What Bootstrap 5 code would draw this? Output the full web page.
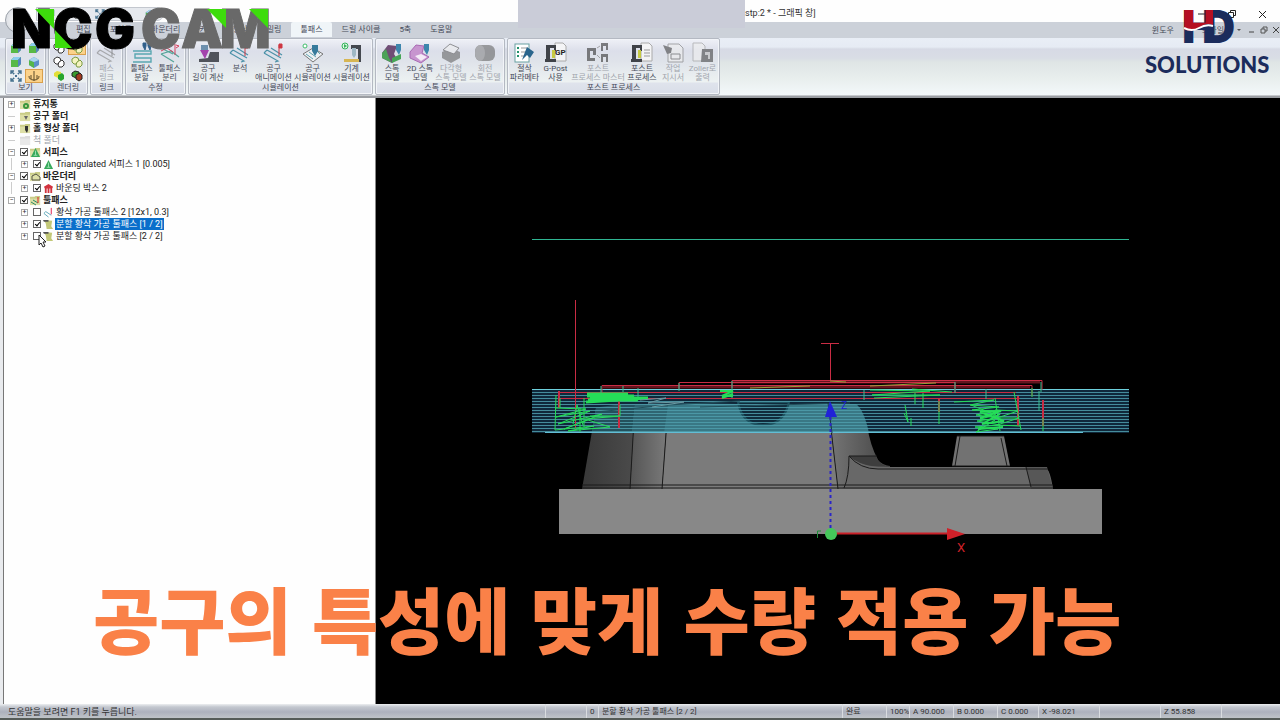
<!DOCTYPE html>
<html lang="ko">
<head>
<meta charset="utf-8">
<meta name="viewport" content="width=device-width, initial-scale=1">
<title>NCG CAM</title>
<link href="https://cdn.jsdelivr.net/npm/bootstrap@5.3.0/dist/css/bootstrap.min.css" rel="stylesheet">
<style>
body{font-family:Roboto,"Noto Sans CJK KR",sans-serif;font-size:8px;line-height:9px;color:#454a58;background:#e9ebee;overflow:hidden}
button{border:0;background:none;padding:0;color:inherit;font-size:inherit;line-height:inherit}
svg{display:block}
.titlebar{height:22px;background:#fefefe}
.tool-left{width:518px;padding-left:36px}
.orb{left:5px;top:7px;width:26px;height:26px;border-radius:50%;border:1px solid #9aa0a8;background:radial-gradient(#fff,#cfd3da)}
.quick{height:14px;margin-top:7px;width:128px;background:#e6e9ee;border:1px solid #c3c7ce;border-radius:0 8px 8px 0}
.cover{width:227px;background:#caccd8;height:28px;position:relative}
.win-title{font-size:9px;line-height:12px;color:#333;margin-top:7px}
.winbtns{margin-top:5px;padding-right:13px;gap:20px}
.tabs{height:16px;background:#ccd1d9;padding-left:67px;gap:1px}
.tabs button{padding:0 9px;height:15px;white-space:nowrap}
.tabs .current{background:#f0f5f8;border-radius:2px 2px 0 0}
.doc-tools button{padding:0;margin-right:12px}
.ribbon{height:57px;padding:0 0 0 5px;gap:2px;background:linear-gradient(#e9eef6 0,#e6ebf4 9px,#d7dae5 11px,#d9dde5 20px,#dfe5e5 24px,#e8eeed 40px,#f3f8fa 57px)}
.grp{border:1px solid #b4b9c2;border-radius:2px;background:linear-gradient(#eff1f7,#dcdfea 12px,#dfe3ea 22px,#edf2f2 43px,#dfe3ec 44px,#d9dee8);box-shadow:inset 0 0 0 1px #f2f4f8;height:57px}
.grp-title{height:12px;line-height:12px;text-align:center}
.grp-body{height:43px;padding-top:2px}
.tool{text-align:center;white-space:nowrap}
.tool svg{width:22px;height:22px;margin:0 auto}
.off{color:#a0a4ac}
.off svg{filter:grayscale(1);opacity:.6}
.t28{width:28px}.t31{width:31px}.t34{width:34px}.t36{width:36px}.t39{width:39px}.t54{width:54px}
.g-view{width:41px}.g-render{width:40px}.g-link{width:33px}.g-edit{width:61px}.g-sim{width:185px}.g-stock{width:130px}.g-post{width:213px}
.mini{display:grid;grid-template-columns:18px 18px;grid-auto-rows:14px;padding-left:1px}
.mini button{display:flex;align-items:center;justify-content:center}
.mini svg{width:12px;height:12px}
.mini .on{background:#fbd28a;border:1px solid #d9a04c}
.seam{height:3px;background:#9b9ea3;border-top:1px solid #c6c9cd}
.treepane{width:373px;margin-left:3px;background:#fefefe;border-left:1px solid #777;border-right:1px solid #888;font-size:9px;color:#222}
.treepane ul{list-style:none;margin:0;padding:0}
.treepane ul ul{padding-left:13px;background:linear-gradient(90deg,transparent 7px,#ccc 7px,#ccc 8px,transparent 8px)}
.treepane li:last-child>ul{background:none}
.node{height:12px;line-height:12px;padding-left:4px;gap:2px;white-space:nowrap}
.exp{width:7px;height:7px;border:1px solid #aaa;background:#fff;font-size:7px;line-height:5px;text-align:center;color:#333;margin-right:3px}
.leaf{width:7px;height:1px;background:#ccc;margin-right:3px}
.node svg{width:11px;height:11px;flex:none}
.node input{appearance:none;width:8px;height:8px;border:1px solid #666;background:#fff;margin:0;position:relative;flex:none}
.node input:checked::after{content:"";position:absolute;left:2px;top:0;width:3px;height:5px;border:solid #000;border-width:0 1px 1px 0;transform:rotate(40deg)}
.node label{padding:0 1px;margin-left:-1px}
.picked label{background:#0a6fcb;color:#fff}
.view3d{background:#000;min-width:0}
.cursor{left:38px;top:234px;width:9px;height:14px}
.status{height:16px;background:linear-gradient(#eceef0 0,#c3c7cf 3px,#adb1bd 8px,#c2c6ca 15px);border-bottom:2px solid #555b58;color:#333}
.status span{height:14px;line-height:16px;padding-left:3px;border-left:1px solid #d9dce0;white-space:nowrap;flex:none}
.status .hint{font-size:9px}
.s12{width:12px}.s23{width:23px}.s41{width:41px}.s44{width:44px}.s59{width:59px}.s61{width:61px}.s244{width:244px}
.caption{left:0;right:0;top:565px;padding-left:93px;font-family:"Noto Sans CJK KR",sans-serif;font-weight:900;font-size:72px;line-height:104px;color:#fa8148;white-space:nowrap}
.brand{left:10px;top:6px;width:262px;height:46px}
.maker{right:4px;top:6px;width:136px;height:74px}
</style>
</head>
<body class="vh-100 d-flex flex-column position-relative">

<svg width="0" height="0" class="position-absolute" aria-hidden="true">
<defs>
<symbol id="cube" viewBox="0 0 12 12"><path d="M1 4l3-3h7v7l-3 3H1z" fill="#58b947"/><path d="M1 4l3-3h7L8 4z" fill="#8ccdf0"/><path d="M8 4l3-3v7l-3 3z" fill="#5584bd"/></symbol>
<symbol id="cube2" viewBox="0 0 12 12"><path d="M1 4l5-3 5 3v5l-5 3-5-3z" fill="#5c8fc8"/><path d="M1 4l5 2v6L1 9z" fill="#55b64a"/><path d="M1 4l5-3 5 3-5 2z" fill="#a9d5ef"/></symbol>
<symbol id="fit" viewBox="0 0 12 12"><path d="M1 4V1h3M8 1h3v3M11 8v3H8M4 11H1V8M1 1l10 10M11 1L1 11" stroke="#47728f" stroke-width="1.4" fill="none"/><path d="M4 4h4v4H4z" fill="#e8ecf2"/><path d="M5 5h2v2H5z" fill="#47728f"/></symbol>
<symbol id="anchor" viewBox="0 0 12 12"><path d="M6 1v10M1 6q0 4 5 4 5 0 5-4M3 5v4M9 5v4" stroke="#5c4a28" fill="none"/></symbol>
<symbol id="solidw" viewBox="0 0 12 12"><path d="M1 3l3-2 3 1 1 3-2 3H3L1 6z" fill="#fff" stroke="#333"/><path d="M6 6l3-2 2 2v3l-2 2H6L5 9z" fill="#fff" stroke="#333"/></symbol>
<symbol id="solidg" viewBox="0 0 12 12"><path d="M1 3l3-2 3 1 1 3-2 3H3L1 6z" fill="#f4f4c0" stroke="#7a9a40"/><path d="M6 6l3-2 2 2v3l-2 2H6L5 9z" fill="#f4f4c0" stroke="#7a9a40"/></symbol>
<symbol id="solidf" viewBox="0 0 12 12"><path d="M1 3l3-2 4 1v4L5 8 1 6z" fill="#e3df38"/><path d="M5 5l4-2 2 2v4l-3 2-3-2z" fill="#27a62c"/></symbol>
<symbol id="solidd" viewBox="0 0 12 12"><path d="M1 3l3-2 4 1v4L5 8 1 6z" fill="#3a9a2e" stroke="#222"/><path d="M5 5l4-2 2 2v4l-3 2-3-2z" fill="#a33b1f" stroke="#222"/></symbol>
<symbol id="zig" viewBox="0 0 22 22"><path d="M4 8l14 8M1 11l14 8-3 1M4 8l-3 3M8 6l11 7" stroke="#4b91a8" stroke-width="1.2" fill="none"/><path d="M16 14V3M16 2h3v4h-3z" stroke="#ce3742" fill="#ce3742"/></symbol>
<symbol id="zigp" viewBox="0 0 22 22"><path d="M2 12l13 8M2 12l10-3 8 6M4 7l10 5" stroke="#55a599" stroke-width="1.2" fill="none"/><path d="M16 13V2M17 3l3 1-3 2M2 9l6-3 6 4" stroke="#d6405c" fill="none"/></symbol>
<symbol id="split" viewBox="0 0 22 22"><path d="M2 20h18v-4H4v-4h16V9H2" stroke="#59a7b1" stroke-width="1.4" fill="none"/><path d="M12 1h3v3l-1 4-2-4zM17 1h3v3l-1 4-2-4z" fill="#315f8b" stroke="#315f8b"/></symbol>
<symbol id="length" viewBox="0 0 22 22"><path d="M2 20v-3l9-1 2-6h9v10z" fill="#50535b"/><path d="M4 3h7v5H4z" fill="#6d90ae"/><path d="M3 8h9l-4 9z" fill="#a443ad"/></symbol>
<symbol id="sim" viewBox="0 0 22 22"><path d="M1 12l10-6 10 6-10 8z" fill="#eceff3" stroke="#777"/><path d="M4 12l7 5M7 10l7 5M15 9l3 3" stroke="#60a4af"/><path d="M10 3h6v6l-3 5-3-5z" fill="#367a9c"/><circle cx="3" cy="4" r="2" fill="#fff" stroke="#40bd6b"/></symbol>
<symbol id="machine" viewBox="0 0 22 22"><path d="M10 3h10v17h-3V7h-7z" fill="#444850"/><path d="M11 6h4v7l-2 3-2-3z" fill="#9eb7c4"/><path d="M3 17h15v3H3z" fill="#d7b654"/><circle cx="4" cy="4" r="3" fill="#dff7e4" stroke="#35b45c"/><path d="M3 2l3 2-3 2z" fill="#35b45c"/></symbol>
<symbol id="stock" viewBox="0 0 22 22"><path d="M1 11l6-8 9 1-3 8 3 5-5 4-10-5z" fill="#704d76"/><path d="M1 11l4-4 3 9 3 5-10-5z" fill="#4ca258"/><path d="M11 21v-5l9-4v5z" fill="#46a557"/><path d="M15 2h5v6l-2 5-3-5z" fill="#3d86ad"/></symbol>
<symbol id="stock2" viewBox="0 0 22 22"><path d="M1 10l6-7 8 1-2 7 7 4-8 6L1 16z" fill="#c795cf" stroke="#a869b3"/><path d="M6 14l6-2 6 3-6 4z" fill="#f4eaf7"/><path d="M15 2h5v6l-2 5-3-5z" fill="#3d86ad"/></symbol>
<symbol id="poly" viewBox="0 0 22 22"><path d="M2 10l9-4 9 4v6l-9 5-9-5z" fill="#666"/><path d="M3 8l7-6 9 4-5 6z" fill="#eee" stroke="#555"/></symbol>
<symbol id="cyl" viewBox="0 0 22 22"><rect x="1" y="3" width="20" height="16" rx="6" fill="#666"/><ellipse cx="6" cy="11" rx="5" ry="8" fill="#888"/></symbol>
<symbol id="params" viewBox="0 0 22 22"><rect x="1" y="2" width="14" height="18" fill="#fff" stroke="#68a0a1"/><path d="M3 6h2M3 10h2M3 14h2" stroke="#23916b" stroke-width="2"/><path d="M7 6h6M7 10h5M7 14h4" stroke="#999"/><path d="M13 5l7 5-4 6-3-3-5 5 3-8z" fill="#29658d"/></symbol>
<symbol id="gp" viewBox="0 0 22 22"><path d="M10 1h8l3 3v15H10z" fill="#f4f4f6" stroke="#aaa"/><path d="M1 3h10v6H9V6H5v11H1zM0 17h11v3H0z" fill="#3f4248"/><path d="M7 8h3v8H7z" fill="#c6ca44"/></symbol>
<symbol id="master" viewBox="0 0 22 22"><path d="M0 6h9v7H6V9H3v7h5v3H0zM14 1h7v7h-2V4h-3v5h-2zM14 12h7v8h-2v-5h-3v5h-2z" fill="#333"/><path d="M10 6l3-2M10 13l3 3" stroke="#777"/></symbol>
<symbol id="sheet" viewBox="0 0 22 22"><path d="M6 2h11l4 4v14H6z" fill="#eee" stroke="#777"/><path d="M1 3l9 3-1 5-4 1z" fill="#444"/><path d="M9 12h9v5H9z" fill="none" stroke="#555"/></symbol>
<symbol id="zoller" viewBox="0 0 22 22"><path d="M1 1h9l3 3v15H1z" fill="#eee" stroke="#999"/><path d="M10 7h11v13H9z" fill="#444"/><path d="M13 10h5v7h-2v-4h-3z" fill="#bbb"/></symbol>
<symbol id="folder" viewBox="0 0 12 12"><path d="M0 2h5l1-1h5v10H0z" fill="#c9cc87"/><path d="M0 4h11v7H0z" fill="#dddfa6"/></symbol>
<symbol id="surf" viewBox="0 0 12 12"><path d="M6 1l5 10H1z" fill="#35a85a"/><path d="M6 4v5M4 9h4" stroke="#9fe0b4"/></symbol>
<symbol id="box" viewBox="0 0 12 12"><path d="M1 4l5-3 5 3-1 2v5H8V6H7v5H5V6H4v5H2V6z" fill="#d2333f"/></symbol>
<symbol id="path" viewBox="0 0 12 12"><path d="M1 7l5 4M3 5l6 4M1 7l2-2" stroke="#58a4b8" fill="none"/><path d="M9 8V1" stroke="#d14"/></symbol>
<symbol id="roll" viewBox="0 0 12 12"><path d="M1 1l9 1-1 6 2 3H4L3 5z" fill="#c3c878"/><path d="M0 1h6v2H1z" fill="#555"/></symbol>
</defs>
</svg>

<header>
  <div class="titlebar d-flex">
    <div class="tool-left">
      <div class="quick d-flex justify-content-between align-items-center px-2"><svg width="10" height="10"><use href="#cube"/></svg><svg width="10" height="10"><use href="#solidw"/></svg><svg width="10" height="10"><use href="#fit"/></svg><svg width="10" height="10"><use href="#anchor"/></svg><svg width="10" height="10"><use href="#cube2"/></svg></div>
    </div>
    <div class="cover"></div>
    <div class="win-title">stp:2 * - 그래픽 창]</div>
    <div class="winbtns d-flex ms-auto">
      <button aria-label="최소화"><svg width="10" height="10"><path d="M1 5h8" stroke="#222"/></svg></button>
      <button aria-label="복원"><svg width="10" height="10"><path d="M1.500 3.500h5v5h-5zM3.500 3V1.500h5v5H7" fill="none" stroke="#222"/></svg></button>
      <button aria-label="닫기"><svg width="10" height="10"><path d="M2 2l7 7M9 2l-7 7" stroke="#222"/></svg></button>
    </div>
  </div>
  <div class="tabs d-flex">
    <button>편집</button><button>포인트</button><button>바운더리</button><button>커브</button><button>형상</button><button>밀링</button><button class="current">툴패스</button><button>드릴 사이클</button><button>5축</button><button>도움말</button>
    <div class="doc-tools d-flex align-items-center ms-auto"><button>윈도우</button><button class="ms-3">스타일</button>
    <svg width="8" height="8"><path d="M1 3h4L3 5z" fill="#555"/></svg><svg class="ms-1" width="8" height="8"><path d="M1 6h5" stroke="#444"/></svg><svg class="ms-1" width="8" height="8"><path d="M1 3h4v4H1zM3 3V1h4v4H5" fill="none" stroke="#555"/></svg><svg class="ms-1" width="8" height="8"><path d="M1 1l6 6M7 1L1 7" stroke="#444"/></svg></div>
  </div>
  <div class="ribbon d-flex">
    <section class="grp g-view"><div class="grp-body mini"><button aria-label="앞면"><svg><use href="#cube"/></svg></button><button aria-label="윗면"><svg><use href="#cube"/></svg></button><button aria-label="옆면"><svg><use href="#cube"/></svg></button><button aria-label="등각"><svg><use href="#cube2"/></svg></button><button aria-label="맞춤"><svg><use href="#fit"/></svg></button><button class="on" aria-label="회전"><svg><use href="#anchor"/></svg></button></div><div class="grp-title">보기</div></section>
    <section class="grp g-render"><div class="grp-body mini"><button aria-label="선"><svg><use href="#solidw"/></svg></button><button class="on" aria-label="윤곽"><svg><use href="#solidg"/></svg></button><button aria-label="와이어"><svg><use href="#solidw"/></svg></button><button aria-label="은선"><svg><use href="#solidg"/></svg></button><button aria-label="음영"><svg><use href="#solidf"/></svg></button><button aria-label="음영과 선"><svg><use href="#solidd"/></svg></button></div><div class="grp-title">렌더링</div></section>
    <section class="grp g-link"><div class="grp-body d-flex justify-content-center"><button class="tool t28 off"><svg><use href="#zig"/></svg>패스<br>링크</button></div><div class="grp-title">링크</div></section>
    <section class="grp g-edit"><div class="grp-body d-flex justify-content-center"><button class="tool t28"><svg><use href="#split"/></svg>툴패스<br>분할</button><button class="tool t28"><svg><use href="#zigp"/></svg>툴패스<br>분리</button></div><div class="grp-title">수정</div></section>
    <section class="grp g-sim"><div class="grp-body d-flex justify-content-center"><button class="tool t36"><svg><use href="#length"/></svg>공구<br>길이 계산</button><button class="tool t28"><svg><use href="#zig"/></svg>분석<br>&nbsp;</button><button class="tool t39"><svg><use href="#zig"/></svg>공구<br>애니메이션</button><button class="tool t39"><svg><use href="#sim"/></svg>공구<br>시뮬레이션</button><button class="tool t39"><svg><use href="#machine"/></svg>기계<br>시뮬레이션</button></div><div class="grp-title">시뮬레이션</div></section>
    <section class="grp g-stock"><div class="grp-body d-flex justify-content-center"><button class="tool t28"><svg><use href="#stock"/></svg>스톡<br>모델</button><button class="tool t28"><svg><use href="#stock2"/></svg>2D 스톡<br>모델</button><button class="tool t34 off"><svg><use href="#poly"/></svg>다각형<br>스톡 모델</button><button class="tool t34 off"><svg><use href="#cyl"/></svg>회전<br>스톡 모델</button></div><div class="grp-title">스톡 모델</div></section>
    <section class="grp g-post"><div class="grp-body d-flex justify-content-center"><button class="tool t31"><svg><use href="#params"/></svg>절삭<br>파라메타</button><button class="tool t31"><svg viewBox="0 0 22 22"><use href="#gp"/><text x="10" y="13" font-size="8" font-weight="700" fill="#222">GP</text></svg>G-Post<br>사용</button><button class="tool t54 off"><svg><use href="#master"/></svg>포스트<br>프로세스 마스터</button><button class="tool t34"><svg viewBox="0 0 22 22"><use href="#gp"/><path d="M13 8h6M13 11h6M13 14h6" stroke="#999"/></svg>포스트<br>프로세스</button><button class="tool t28 off"><svg><use href="#sheet"/></svg>작업<br>지시서</button><button class="tool t31 off"><svg><use href="#zoller"/></svg>Zoller로<br>출력</button></div><div class="grp-title">포스트 프로세스</div></section>
  </div>
  <div class="seam"></div>
</header>

<main class="d-flex flex-grow-1 overflow-hidden">
  <nav class="treepane flex-shrink-0" aria-label="작업 트리">
    <ul>
      <li><div class="node d-flex align-items-center"><span class="exp">+</span><svg><use href="#folder"/><circle cx="6" cy="7" r="2" fill="none" stroke="#38963b" stroke-width="2"/></svg><span class="fw-semibold">휴지통</span></div></li>
      <li><div class="node d-flex align-items-center"><span class="leaf"></span><svg><use href="#folder"/><path d="M4 5h4l-2 4z" fill="#666"/></svg><span class="fw-semibold">공구 폴더</span></div></li>
      <li><div class="node d-flex align-items-center"><span class="exp">+</span><svg><use href="#folder"/><path d="M5 3h3v4l-1 3-2-3z" fill="#333"/></svg><span class="fw-semibold">홀 형상 폴더</span></div></li>
      <li><div class="node d-flex align-items-center off"><span class="leaf"></span><svg><use href="#folder"/></svg><span>척 폴더</span></div></li>
      <li><div class="node d-flex align-items-center"><span class="exp">−</span><input type="checkbox" id="n1" checked><svg><use href="#folder"/><use href="#surf"/></svg><label for="n1" class="fw-bold">서피스</label></div>
        <ul><li><div class="node d-flex align-items-center"><span class="exp">+</span><input type="checkbox" id="n2" checked><svg><use href="#surf"/></svg><label for="n2">Triangulated 서피스 1 [0.005]</label></div></li></ul></li>
      <li><div class="node d-flex align-items-center"><span class="exp">−</span><input type="checkbox" id="n3" checked><svg><use href="#folder"/><path d="M2 9V5l4-2 4 3v3z" fill="none" stroke="#554"/></svg><label for="n3" class="fw-bold">바운더리</label></div>
        <ul><li><div class="node d-flex align-items-center"><span class="exp">+</span><input type="checkbox" id="n4" checked><svg><use href="#box"/></svg><label for="n4">바운딩 박스 2</label></div></li></ul></li>
      <li><div class="node d-flex align-items-center"><span class="exp">−</span><input type="checkbox" id="n5" checked><svg><use href="#folder"/><path d="M1 7l5 3M3 5l5 3" stroke="#2c8b6a"/><path d="M8 8V2" stroke="#d22"/></svg><label for="n5" class="fw-bold">툴패스</label></div>
        <ul>
          <li><div class="node d-flex align-items-center"><span class="exp">+</span><input type="checkbox" id="n6"><svg><use href="#path"/></svg><label for="n6">황삭 가공 툴패스 2 [12x1, 0.3]</label></div></li>
          <li><div class="node d-flex align-items-center picked"><span class="exp">+</span><input type="checkbox" id="n7" checked><svg><use href="#roll"/></svg><label for="n7">분할 황삭 가공 툴패스 [1 / 2]</label></div></li>
          <li><div class="node d-flex align-items-center"><span class="exp">+</span><input type="checkbox" id="n8"><svg><use href="#roll"/></svg><label for="n8">분할 황삭 가공 툴패스 [2 / 2]</label></div></li>
        </ul></li>
    </ul>
  </nav>
  <div class="view3d flex-grow-1">
    <svg class="w-100 h-100" viewBox="376 98 904 606" role="img" aria-label="툴패스 측면 보기">
      <defs>
        <linearGradient id="gl" x1="0" x2="1"><stop offset="0" stop-color="#383838"/><stop offset="1" stop-color="#4b4b4b"/></linearGradient>
        <linearGradient id="gm" x1="0" x2="1"><stop offset="0" stop-color="#545454"/><stop offset="1" stop-color="#7b7b7b"/></linearGradient>
        <linearGradient id="gr" x1="0" x2="1"><stop offset="0" stop-color="#777"/><stop offset="1" stop-color="#444"/></linearGradient>
        <pattern id="passes" x="532" y="389" width="600" height="3" patternUnits="userSpaceOnUse"><rect width="600" height="1" fill="#4f9eac" fill-opacity=".85"/></pattern>
      </defs>
      <rect x="532" y="239" width="597" height="1" fill="#2fb592"/>
      <!-- part -->
      <path d="M582 489L596 408Q603 403 635 403L630 489z" fill="url(#gl)"/>
      <path d="M630 489L635 403H668L662 489z" fill="url(#gm)"/>
      <path d="M662 489L668 407Q700 402 738 401H828L838 489z" fill="#7b7b7b"/>
      <path d="M828 402H856Q864 405 867 425T878 460Q882 465 890 466V489H838z" fill="url(#gr)"/>
      <path d="M844 489Q849 477 849 456Q862 466 878 467H1045Q1050 469 1053 489z" fill="#686868"/>
      <path d="M849 456H876Q879 464 886 466H872Q858 464 849 456z" fill="#3e3e3e"/>
      <path d="M952 466L957 436H1004L1010 466z" fill="#727272"/>
      <path d="M1026 467H1047L1053 489H1031z" fill="#575757"/>
      <path d="M630 489L635 403M662 489L668 407M828 403L838 489M582 485H1052M582 488H1053M844 488Q849 477 849 456H877M849 456Q860 469 878 469H1048M955 466L960 436M1007 466L1001 438M952 466H1010M957 436H1004M1026 467L1031 487" fill="none" stroke="#1b1b1b"/>
      <rect x="559" y="489" width="543" height="45" fill="#888"/>
      <!-- cutting passes -->
      <rect x="532" y="389" width="597" height="44" fill="#10283a"/>
      <path d="M592 433L596 408Q640 402 738 404H856Q864 410 869 433z" fill="#397885"/>
      <path d="M592 433L596 408Q614 404 635 404L632 433z" fill="#23515d"/>
      <path d="M632 433L635 405H668L664 433z" fill="#2f6572"/>
      <path d="M738 402Q742 425 763 425T789 402z" fill="#102b3c" stroke="#1e5361" stroke-width="2"/>
      <rect x="532" y="389" width="597" height="44" fill="url(#passes)"/>
      <rect x="532" y="389" width="597" height="1" fill="#6dd0dc"/>
      <rect x="545" y="432" width="538" height="1" fill="#62bdd5"/>
      <path d="M596 412L668 405L740 401M700 407L850 403" stroke="#214e5a" fill="none"/>
      <path d="M828 403L832 433" stroke="#173742"/>
      <!-- rapid moves -->
      <path d="M603 387H1030M733 382H1040" stroke="#64151e" stroke-width="3"/>
      <g fill="none" stroke="#c92c44">
        <path d="M575.500 300V429M821 343.500H839M830.500 343V380M559 392.500H1016M559 398.500H1020M602 399V385.500H1032V396M679 389V382.500H955V393M732 388V380.500H1042V390"/>
        <path d="M559 391V408M619 399V428M939 399V412M1018 396V426M1043 400V426" stroke-width="2"/>
      </g>
      <path d="M830 381L846 382M750 388L810 386M870 386L936 383" stroke="#99a039" fill="none"/>
      <g fill="none" stroke="#39bd91"><path d="M601 386V396M623 386V392M638 388V398M679 383V391M732 381V398M864 390V400M955 382V393M986 389V399M1041 382V392M1039 391V411"/></g>
      <!-- linking moves -->
      <g fill="none" stroke="#25dc58">
        <path d="M587 396H634L620 398H648L586 402L620 399L588 400H638M587 394H628L590 397H625" stroke-width="3"/>
        <path d="M555 408L586 409L556 417L590 411L558 424L602 414L564 429L588 420L610 427L568 431L594 426L555 430L556 395M580 408V432M584 398V427M573 424L577 405L583 425M590 416H620L585 419M620 405V416M560 398V408"/>
        <path d="M720 391H733L722 396H733M722 398L733 394" stroke-width="2"/>
        <path d="M870 390L930 391L872 395H940L874 398M912 389L952 392M905 405L908 422L904 413M911 418V426M923 393V408M915 393V404M939 401V424M1032 388V397M1043 418V431"/>
        <path d="M954 402L994 400L970 405L999 407L972 410L997 411L976 415L999 418L977 421L1000 425L975 427L998 429L976 432L995 420L980 419L996 415L971 405M995 398L1000 431M995 410L1018 411L997 418L1019 418L997 425L1020 426M1014 392L1021 430"/>
        <path d="M980 418L1001 411L980 412L1004 421L982 424L1000 414M978 429L1003 427" stroke-width="2"/>
      </g>
      <path d="M640 400L666 398L648 403L684 402L652 407" stroke="#6a9aa2" fill="none"/>
      <!-- axes -->
      <path d="M830.500 417V531" stroke="#2a25c8" stroke-width="2" stroke-dasharray="3 3"/>
      <path d="M825 417L830 401L837 417z" fill="#2022d8"/>
      <text x="841" y="409" font-size="10" fill="#2022d8">Z</text>
      <path d="M831 533.500H948" stroke="#c92028" stroke-width="2"/>
      <path d="M947 528L965 534L947 540z" fill="#d02029"/>
      <text x="957" y="552" font-size="13" fill="#d02029">X</text>
      <path d="M817.500 538V531H821" stroke="#1d8b37" fill="none"/>
      <circle cx="831" cy="534" r="6" fill="#45c65a"/>
    </svg>
  </div>
</main>

<footer class="status d-flex">
  <span class="hint flex-grow-1 flex-shrink-1 border-0 ps-2">도움말을 보려면 F1 키를 누릅니다.</span>
  <span class="s41"></span><span class="s12">0</span><span class="s244">분할 황삭 가공 툴패스 [2 / 2]</span><span class="s44">완료</span><span class="s23">100%</span><span class="s44">A 90.000</span><span class="s44">B 0.000</span><span class="s41">C 0.000</span><span class="s61">X -98.021</span><span class="s61"></span><span class="s61">Z 55.858</span><span class="s59"></span>
</footer>

<div class="orb position-absolute"></div>
<svg class="brand position-absolute" viewBox="10 6 262 46" role="img" aria-label="NCG CAM" font-family="Inter, sans-serif" font-weight="900" font-size="53">
  <text x="11 53 95" y="48" fill="#000" stroke="#000">NCG</text>
  <text x="141 181 220" y="48" fill="#696969" stroke="#696969">CAM</text>
  <path d="M35 9H54V29zM55 30L72 48H55zM207 9H226V28zM249 9H268V28z" fill="#3ddc0c"/>
</svg>
<svg class="maker position-absolute" viewBox="1140 6 136 74" role="img" aria-label="HD Solutions">
  <defs><clipPath id="top"><path d="M1180 5H1213V25Q1206 22 1199 28T1180 28z"/></clipPath></defs>
  <g font-family="Inter, sans-serif" font-weight="900" font-size="46" fill="#1b2c5c"><text x="1202" y="43">D</text><text x="1182" y="43">H</text><text x="1182" y="43" fill="#b50f22" clip-path="url(#top)">H</text></g>
  <path d="M1184 28Q1192 32 1199 28T1213 26" fill="none" stroke="#fff" stroke-width="2"/>
  <text x="1145" y="73" font-family="Lato, sans-serif" font-weight="900" font-size="22" fill="#1b2c5c">SOLUTIONS</text>
</svg>
<svg class="cursor position-absolute" viewBox="0 0 9 14"><path d="M1 1v10l2-2 2 4 2-1-2-4h3z" fill="#fff" stroke="#222"/></svg>
<div class="caption position-absolute">공구의 특성에 맞게 수량 적용 가능</div>
<script src="https://cdn.jsdelivr.net/npm/bootstrap@5.3.0/dist/js/bootstrap.bundle.min.js"></script>
</body>
</html>
